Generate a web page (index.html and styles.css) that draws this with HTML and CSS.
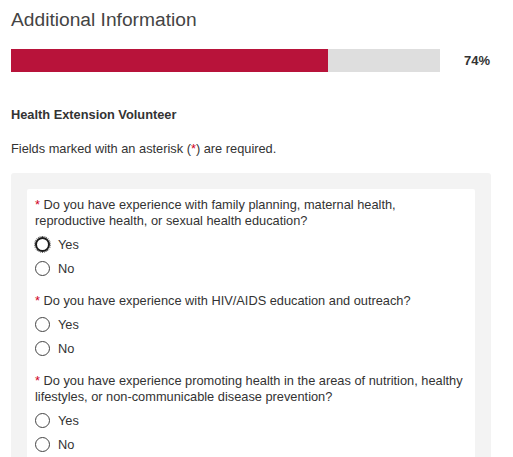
FILE: index.html
```html
<!DOCTYPE html>
<html lang="en">
<head>
<meta charset="utf-8">
<title>Additional Information</title>
<link rel="stylesheet" href="styles.css">
</head>
<body>
<main class="page">
  <h1 class="title">Additional Information</h1>
  <div class="progress">
    <div class="progress-track"><div class="progress-fill" style="width:74%"></div></div>
    <span class="progress-label">74%</span>
  </div>
  <h2 class="section-title">Health Extension Volunteer</h2>
  <p class="note">Fields marked with an asterisk (<span class="req">*</span>) are required.</p>
  <div class="panel">
    <div class="card">
      <div class="question" role="radiogroup">
        <p class="q-text"><span class="req">*</span> Do you have experience with family planning, maternal health, reproductive health, or sexual health education?</p>
        <label class="option"><span class="radio focus"></span>Yes</label>
        <label class="option"><span class="radio"></span>No</label>
      </div>
      <div class="question" role="radiogroup">
        <p class="q-text"><span class="req">*</span> Do you have experience with HIV/AIDS education and outreach?</p>
        <label class="option"><span class="radio"></span>Yes</label>
        <label class="option"><span class="radio"></span>No</label>
      </div>
      <div class="question" role="radiogroup">
        <p class="q-text"><span class="req">*</span> Do you have experience promoting health in the areas of nutrition, healthy lifestyles, or non-communicable disease prevention?</p>
        <label class="option"><span class="radio"></span>Yes</label>
        <label class="option"><span class="radio"></span>No</label>
      </div>
    </div>
  </div>
</main>
</body>
</html>
```
FILE: styles.css
```css
html, body {
  margin: 0;
  padding: 0;
  background: #fff;
  overflow: hidden;
}
body {
  font-family: "Liberation Sans", Arial, sans-serif;
  color: #333;
  font-size: 12.8px;
}
.page {
  padding: 0 22px 0 11px;
}
.title {
  margin: 8px 0 0;
  font-size: 19.2px;
  line-height: 24px;
  font-weight: normal;
  color: #444;
}
.progress {
  margin-top: 17px;
  display: flex;
  align-items: center;
}
.progress-track {
  width: 429px;
  height: 23px;
  background: #dedede;
}
.progress-fill {
  height: 100%;
  background: #b8133a;
}
.progress-label {
  margin-left: 24px;
  font-weight: bold;
  font-size: 13px;
  color: #333;
}
.section-title {
  margin: 35px 0 0;
  font-size: 12.8px;
  line-height: 16px;
  font-weight: bold;
  color: #333;
}
.note {
  margin: 18px 0 0;
  line-height: 16px;
  color: #333;
}
.req {
  color: #d0021b;
}
.panel {
  margin-top: 16px;
  width: 448px;
  padding: 16px;
  background: #f3f3f3;
  border-radius: 3px;
}
.card {
  background: #fff;
  border-radius: 2px;
  padding: 8px 8px 12px;
}
.question {
  margin: 0 0 13px;
}
.q-text {
  margin: 0 0 3px;
  line-height: 16px;
}
.option {
  display: flex;
  align-items: center;
  height: 24px;
  gap: 8px;
}
.radio {
  box-sizing: border-box;
  width: 15px;
  height: 15px;
  border: 1px solid #444;
  border-radius: 50%;
  background: #fff;
  flex: none;
}
.radio.focus {
  border: 2px solid #1a1a1a;
  outline: 1px dotted #555;
  outline-offset: 0;
}
```
